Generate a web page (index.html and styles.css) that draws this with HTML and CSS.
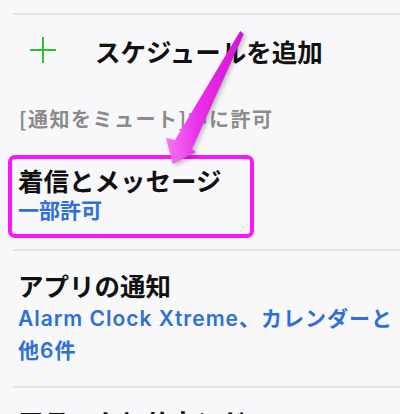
FILE: index.html
```html
<!DOCTYPE html>
<html lang="ja">
<head>
  <meta charset="UTF-8">
  <meta name="viewport" content="width=device-width, initial-scale=1.0">
  <title>通知をミュート</title>
  <link rel="stylesheet" href="styles.css">
</head>
<body>
  <div class="screen">
    <div class="divider"></div>
    <div class="add-row">
      <svg class="plus" width="28" height="28" viewBox="0 0 28 28">
        <path d="M14 1v26M1 14h26" stroke="#2cc12c" stroke-width="2" fill="none"/>
      </svg>
      <span class="add-label">スケジュールを追加</span>
    </div>
    <div class="section-title">[通知をミュート]中に許可</div>
    <div class="item highlight">
      <div class="item-title">着信とメッセージ</div>
      <div class="item-sub">一部許可</div>
    </div>
    <div class="divider"></div>
    <div class="item">
      <div class="item-title">アプリの通知</div>
      <div class="item-sub">Alarm Clock Xtreme、カレンダーと他6件</div>
    </div>
    <div class="divider"></div>
    <div class="item last">
      <div class="item-title">アラームとサウンド</div>
    </div>

    <!-- annotation arrow pointing at the highlighted row -->
    <svg class="arrow" width="400" height="414" viewBox="0 0 400 414">
      <defs>
        <linearGradient id="shaft" x1="0" y1="0" x2="1" y2="0">
          <stop offset="0" stop-color="#f27af2"/>
          <stop offset="0.4" stop-color="#ea30ea"/>
          <stop offset="1" stop-color="#d612d6"/>
        </linearGradient>
      </defs>
      <polygon points="240.2,31.1 243.8,33.9 192,149 196,152 172.7,164 166,138 175,140" fill="url(#shaft)"/>
    </svg>
  </div>
</body>
</html>
```

FILE: styles.css
```css
body {
  margin: 0;
  padding: 0;
  background: #f8f8fa;
  font-family: 'Noto Sans CJK JP', 'Noto Sans', sans-serif;
  color: #111;
}
.screen {
  position: relative;
  width: 400px;
  height: 414px;
  overflow: hidden;
  padding-left: 13px;
  box-sizing: border-box;
}
.divider {
  height: 2px;
  background: #e3e3e6;
}
.screen > .divider:first-child {
  margin-top: 13px;
}
.add-row {
  display: flex;
  align-items: center;
  padding: 22px 0 0 16px;
}
.plus {
  flex: none;
  margin-top: -2px;
}
.add-label {
  margin-left: 38px;
  font-size: 25.5px;
  line-height: 28px;
  font-weight: 700;
}
.section-title {
  margin-top: 43px;
  padding-left: 6px;
  font-size: 20px;
  line-height: 22px;
  font-weight: 700;
  color: #8b8b8d;
  letter-spacing: 1.5px;
}
.item {
  padding: 21px 0 20px 5px;
}
.item-title {
  font-size: 25.5px;
  line-height: 26px;
  font-weight: 700;
}
.item-sub {
  margin-top: 5px;
  font-family: 'Inter', 'Noto Sans CJK JP', sans-serif;
  font-size: 21px;
  line-height: 31.5px;
  font-weight: 600;
  color: #2f6fd8;
  letter-spacing: 1px;
}
.highlight {
  box-sizing: border-box;
  margin: 25px 0 11px -5px;
  width: 246px;
  padding: 8px 0 11px 6px;
  border: 4px solid #ff14ff;
  border-radius: 7px;
}
.highlight .item-sub {
  margin-top: 6px;
  line-height: 24px;
  letter-spacing: 0;
}
.last {
  padding-top: 20px;
}
.arrow {
  position: absolute;
  left: 0;
  top: 0;
  pointer-events: none;
  filter: drop-shadow(2px 2px 2px rgba(0, 0, 0, 0.25));
}
```
